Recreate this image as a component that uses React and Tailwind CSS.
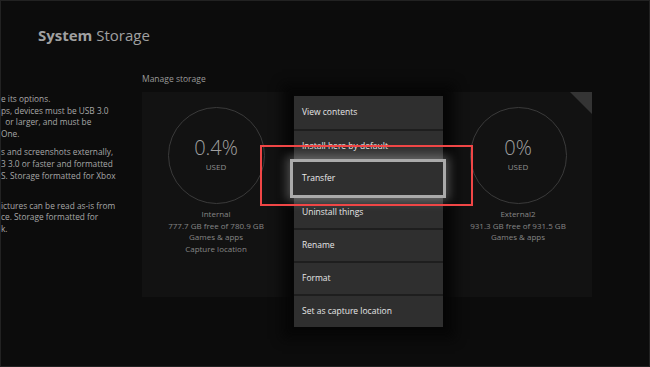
import React from "react";

const leftText = [
  ["e its options.", "ps, devices must be USB 3.0", "  or larger, and must be", "One."],
  ["s and screenshots externally,", "3 3.0 or faster and formatted", "S. Storage formatted for Xbox", " "],
  ["ictures can be read as-is from", "ce. Storage formatted for", "k."],
];

const menuItems = [
  "View contents",
  "Install here by default",
  "Transfer",
  "Uninstall things",
  "Rename",
  "Format",
  "Set as capture location",
];

function StorageCard({ pct, lines, corner }) {
  return (
    <div className="relative w-[148px] h-[205px] bg-[#121212] flex flex-col items-center pt-[15px]">
      {corner && (
        <div className="absolute top-0 right-0 w-0 h-0 border-t-[22px] border-t-[#343434] border-l-[22px] border-l-transparent" />
      )}
      <div className="w-[97px] h-[97px] rounded-full border-[1.5px] border-[#3a3a3a] flex flex-col items-center justify-center">
        <div className="text-[20px] leading-[24px] font-light text-[#a0a0a0] mt-[-4px]">{pct}</div>
        <div className="text-[8px] leading-[10px] text-[#909090] mt-[2px]">USED</div>
      </div>
      <div className="mt-[4px] flex flex-col items-center text-[8px] leading-[11.7px] text-[#868686]">
        {lines.map((l) => (
          <div key={l}>{l}</div>
        ))}
      </div>
    </div>
  );
}

function App() {
  return (
    <div className="relative w-[650px] h-[367px] overflow-hidden bg-[#0c0c0c] border border-[#222] font-['Open_Sans',sans-serif]">
      <h1 className="pl-[37px] pt-[23px] text-[15px] leading-[22px] text-[#a0a0a0]">
        <span className="font-bold">System</span> Storage
      </h1>

      <div className="flex mt-[27px]">
        <div className="w-[141px] pt-[20px] text-[8.3px] leading-[11.6px] text-[#a8a8a8] flex flex-col gap-[7px]">
          {leftText.map((p, i) => (
            <div key={i}>
              {p.map((l, j) => (
                <div key={j} className="whitespace-pre overflow-hidden">{l}</div>
              ))}
            </div>
          ))}
        </div>

        <div className="flex flex-col">
          <div className="text-[8.5px] leading-[12px] text-[#9a9a9a] mb-[7px]">Manage storage</div>
          <div className="flex gap-[3px]">
            <StorageCard
              pct="0.4%"
              lines={["Internal", "777.7 GB free of 780.9 GB", "Games & apps", "Capture location"]}
            />
            <div className="w-[148px] h-[205px] bg-[#121212]" />
            <StorageCard
              pct="0%"
              corner
              lines={["External2", "931.3 GB free of 931.5 GB", "Games & apps"]}
            />
          </div>
        </div>
      </div>

      <div className="absolute left-[293px] top-[95px] w-[149px] bg-[#2f2f2f] shadow-[0_0_10px_12px_rgba(6,6,6,0.95)]">
        {menuItems.map((m, i) => (
          <div
            key={m}
            className={`h-[33px] flex items-center pl-[8px] text-[8.5px] font-medium text-[#e6e6e6] ${
              i > 0 ? "border-t-2 border-[#1e1e1e]" : ""
            }`}
          >
            {m}
          </div>
        ))}
      </div>

      <div className="absolute left-[289px] top-[158px] w-[156px] h-[39px] border-[3px] border-[#aaaaaa] bg-[#2f2f2f] shadow-[0_0_10px_3px_rgba(255,255,255,0.3)] flex items-center pl-[9px] text-[8.5px] font-medium text-[#ececec]">
        Transfer
      </div>

      <div className="absolute left-[259px] top-[144px] w-[213px] h-[61px] border-2 border-[#f04646]" />
    </div>
  );
}

export default App;
